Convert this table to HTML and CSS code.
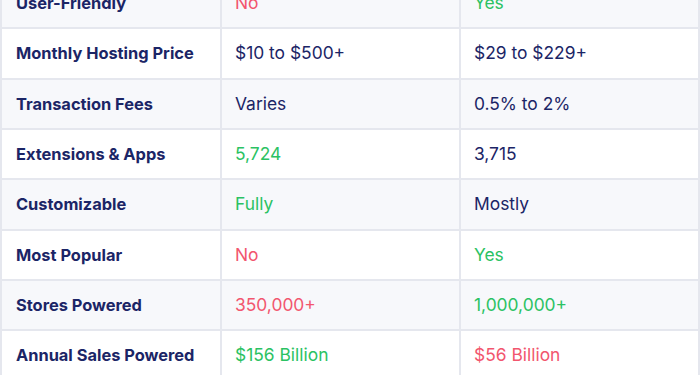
FILE: index.html
```html
<!DOCTYPE html>
<html lang="en">
<head>
<meta charset="utf-8">
<link rel="stylesheet" href="styles.css">
</head>
<body>
<table class="compare">
  <colgroup>
    <col class="c-label">
    <col class="c-val">
    <col class="c-val">
  </colgroup>
  <tbody>
    <tr class="alt"><th>User-Friendly</th><td class="bad">No</td><td class="good">Yes</td></tr>
    <tr><th>Monthly Hosting Price</th><td>$10 to $500+</td><td>$29 to $229+</td></tr>
    <tr class="alt"><th>Transaction Fees</th><td>Varies</td><td>0.5% to 2%</td></tr>
    <tr><th>Extensions &amp; Apps</th><td class="good">5,724</td><td>3,715</td></tr>
    <tr class="alt"><th>Customizable</th><td class="good">Fully</td><td>Mostly</td></tr>
    <tr><th>Most Popular</th><td class="bad">No</td><td class="good">Yes</td></tr>
    <tr class="alt"><th>Stores Powered</th><td class="bad">350,000+</td><td class="good">1,000,000+</td></tr>
    <tr><th>Annual Sales Powered</th><td class="good">$156 Billion</td><td class="bad">$56 Billion</td></tr>
  </tbody>
</table>
</body>
</html>
```
FILE: styles.css
```css
html, body {
  margin: 0;
  padding: 0;
  background: #ffffff;
}
body {
  overflow: hidden;
  font-family: Inter, "Noto Sans", sans-serif;
}
.compare {
  width: 700px;
  margin-top: -23px;
  table-layout: fixed;
  border-collapse: separate;
  border-spacing: 2px;
  background: #e5e7ee;
}
.c-label { width: 218px; }
.c-val { width: 237px; }
.compare th,
.compare td {
  height: 48.33px;
  padding: 0 0 0 13px;
  text-align: left;
  vertical-align: middle;
  font-size: 17.4px;
  line-height: 20px;
  color: #1b2566;
  background: #ffffff;
  white-space: nowrap;
}
.compare th {
  font-size: 16.4px;
  font-weight: 700;
  padding-left: 14px;
}
.compare td {
  font-weight: 400;
}
.compare tr.alt th,
.compare tr.alt td {
  background: #f7f8fb;
}
.compare td.good { color: #2bc263; }
.compare td.bad { color: #f2566e; }
```
